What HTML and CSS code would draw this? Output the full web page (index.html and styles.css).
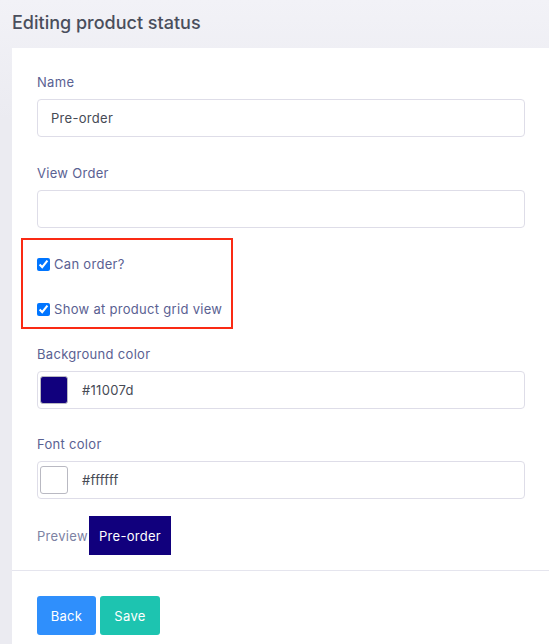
FILE: index.html
```html
<!DOCTYPE html>
<html>
<head>
<meta charset="utf-8">
<link rel="stylesheet" href="styles.css">
</head>
<body>
<div class="page">
  <h1 class="title">Editing product status</h1>
  <div class="card">
    <div class="card-body">
      <div class="field field-wide">
        <label class="label">Name</label>
        <div class="input">Pre-order</div>
      </div>
      <div class="field">
        <label class="label">View Order</label>
        <div class="input"></div>
      </div>
      <div class="highlight">
        <label class="check"><input type="checkbox" checked> Can order?</label>
        <label class="check"><input type="checkbox" checked> Show at product grid view</label>
      </div>
      <div class="field">
        <label class="label">Background color</label>
        <div class="input color-input"><span class="swatch swatch-dark"></span><span>#11007d</span></div>
      </div>
      <div class="field">
        <label class="label">Font color</label>
        <div class="input color-input"><span class="swatch swatch-light"></span><span>#ffffff</span></div>
      </div>
      <div class="preview">
        <span class="preview-label">Preview</span>
        <span class="badge">Pre-order</span>
      </div>
    </div>
    <div class="card-footer">
      <button class="btn btn-back">Back</button>
      <button class="btn btn-save">Save</button>
    </div>
  </div>
</div>
</body>
</html>
```
FILE: styles.css
```css
* { box-sizing: border-box; }
html, body { margin: 0; padding: 0; }
body {
  background: linear-gradient(#f2f2f7, #ebebf1 120px);
  font-family: Inter, "Open Sans", sans-serif;
  font-size: 13px;
  letter-spacing: 0.3px;
  height: 644px;
  overflow: hidden;
}
.page {
  padding-left: 12px;
}
.title {
  margin: 0;
  height: 48px;
  padding-top: 12px;
  font-size: 18px;
  line-height: 22px;
  font-weight: 500;
  letter-spacing: 0;
  color: #4a4e5c;
}
.card {
  background: #fff;
  height: 600px;
}
.card-body {
  padding: 24px 24px 15px 25px;
  display: flex;
  flex-direction: column;
}
.field {
  display: flex;
  flex-direction: column;
  gap: 7px;
  margin-bottom: 25px;
}
.field-wide {
  margin-bottom: 26px;
}
.label {
  line-height: 20px;
  color: #5a6192;
}
.input {
  height: 38px;
  border: 1px solid #dedde8;
  border-radius: 4px;
  padding: 0 13px;
  display: flex;
  align-items: center;
  color: #464a55;
}
.color-input {
  padding: 2px;
  gap: 14px;
}
.swatch {
  width: 28px;
  height: 28px;
  border: 1px solid #b9b9c2;
  border-radius: 3px;
}
.swatch-dark { background: #11007d; }
.swatch-light { background: #fff; }
.highlight {
  margin: -15px 0 15px -16px;
  width: 212px;
  border: 2px solid #fa2a14;
  padding: 14px 0 8px 14px;
  display: flex;
  flex-direction: column;
  gap: 25px;
}
.check {
  display: flex;
  align-items: center;
  line-height: 20px;
  color: #5a6192;
}
.check input {
  margin: 0 4px 0 0;
  width: 13px;
  height: 13px;
}
.preview {
  display: flex;
  align-items: center;
  margin-top: -8px;
}
.preview-label {
  color: #7d82a3;
  width: 52px;
}
.badge {
  background: #11007d;
  color: #fff;
  height: 39px;
  width: 82px;
  justify-content: center;
  display: flex;
  align-items: center;
}
.card-footer {
  border-top: 1px solid #e5e5ee;
  padding: 25px 25px;
  display: flex;
  gap: 4px;
}
.btn {
  height: 39px;
  border: none;
  border-radius: 3px;
  color: #fff;
  font-family: inherit;
  font-size: 13px;
  letter-spacing: 0.3px;
  padding: 0;
}
.btn-back { background: #2f8ffc; width: 59px; }
.btn-save { background: #1dc4b0; width: 60px; }
```
